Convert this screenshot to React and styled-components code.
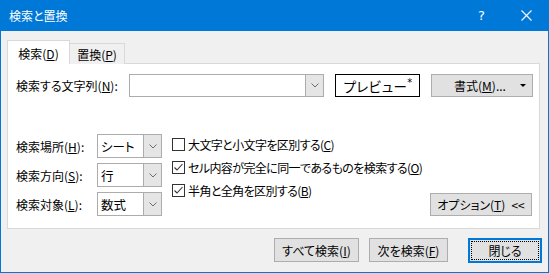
import React from "react";
import styled, { createGlobalStyle } from "styled-components";

const GlobalStyle = createGlobalStyle`
  html, body {
    margin: 0;
    padding: 0;
    background: #ffffff;
  }
  body {
    font-family: "Noto Sans CJK JP", "Noto Sans", sans-serif;
    font-size: 12px;
    color: #000000;
    font-feature-settings: "palt";
  }
  u {
    text-underline-offset: 1px;
  }
`;

const Window = styled.div`
  box-sizing: border-box;
  width: 549px;
  height: 273px;
  display: flex;
  flex-direction: column;
  background: #f0f0f0;
  border: 1px solid #0078d7;
  border-top: none;
`;

const TitleBar = styled.div`
  height: 31px;
  margin: 0 -1px;
  background: #0078d7;
  color: #ffffff;
  display: flex;
  align-items: center;
  padding-left: 9px;
  flex-shrink: 0;
`;

const Title = styled.div`
  flex: 1;
  font-size: 12px;
`;

const TitleButton = styled.div`
  width: 45px;
  height: 31px;
  display: flex;
  align-items: center;
  justify-content: center;
  font-family: "DejaVu Sans", sans-serif;
  font-size: 13px;
`;

const Body = styled.div`
  flex: 1;
  display: flex;
  flex-direction: column;
  padding: 9px 0 0 6px;
`;

const TabStrip = styled.div`
  display: flex;
  align-items: flex-end;
  height: 24px;
  margin-bottom: -1px;
  position: relative;
  z-index: 1;
`;

const Tab = styled.div`
  box-sizing: border-box;
  display: flex;
  align-items: center;
  justify-content: center;
  border: 1px solid #d9d9d9;
  border-bottom: none;
  width: ${p => p.$w}px;
  height: ${p => (p.$active ? 24 : 21)}px;
  background: ${p => (p.$active ? "#ffffff" : "#f0f0f0")};
  ${p => (p.$active ? "" : "border-left: none;")}
  padding-top: 1px;
`;

const Panel = styled.div`
  box-sizing: border-box;
  width: 533px;
  height: 166px;
  background: #ffffff;
  border: 1px solid #d9d9d9;
  padding: 10px 0 0 8px;
  display: flex;
  flex-direction: column;
`;

const Row = styled.div`
  display: flex;
  align-items: center;
  height: 23px;
`;

const Label = styled.div`
  width: ${p => p.$w}px;
  flex-shrink: 0;
  white-space: nowrap;
`;

const Combo = styled.div`
  box-sizing: border-box;
  width: ${p => p.$w}px;
  height: ${p => p.$h}px;
  border: 1px solid #acacac;
  background: #ffffff;
  display: flex;
  flex-shrink: 0;
`;

const ComboText = styled.div`
  flex: 1;
  display: flex;
  align-items: center;
  padding-left: 3px;
  font-size: 12.5px;
`;

const ComboButton = styled.div`
  width: 17px;
  background: #e5e5e5;
  border-left: 1px solid #acacac;
  display: flex;
  align-items: center;
  justify-content: center;
`;

const Preview = styled.div`
  box-sizing: border-box;
  width: 85px;
  height: 23px;
  margin-left: 11px;
  border: 1px solid #000000;
  display: flex;
  align-items: center;
  justify-content: center;
  font-size: 13.5px;
  font-feature-settings: normal;
  letter-spacing: -0.8px;
`;

const Star = styled.span`
  font-family: "DejaVu Sans", sans-serif;
  font-size: 10px;
  align-self: flex-start;
  margin-top: 2px;
  margin-left: 1px;
  letter-spacing: 0;
`;

const Button = styled.div`
  box-sizing: border-box;
  width: ${p => p.$w}px;
  height: ${p => p.$h || 23}px;
  margin-left: ${p => p.$ml || 0}px;
  background: #e1e1e1;
  border: 1px solid #adadad;
  display: flex;
  align-items: center;
  justify-content: center;
  white-space: nowrap;
  flex-shrink: 0;
`;

const DefaultButton = styled(Button)`
  border: 2px solid #0078d7;
  padding: 1px;
`;

const FocusRing = styled.div`
  flex: 1;
  align-self: stretch;
  border: 1px dotted #000000;
  display: flex;
  align-items: center;
  justify-content: center;
`;

const MenuButtonText = styled.div`
  flex: 1;
  text-align: center;
  padding-left: 8px;
`;

const Caret = styled.div`
  width: 0;
  height: 0;
  border-left: 3px solid transparent;
  border-right: 3px solid transparent;
  border-top: 3px solid #000000;
  margin-right: 6px;
`;

const Options = styled.div`
  display: flex;
  align-items: flex-end;
  margin-top: 37px;
`;

const FieldGrid = styled.div`
  display: grid;
  grid-template-columns: 81px 65px;
  grid-auto-rows: 24px;
  row-gap: 5px;
  align-items: center;
`;

const CheckList = styled.div`
  display: flex;
  flex-direction: column;
  gap: 2px;
  margin-left: 10px;
  align-self: flex-start;
`;

const CheckRow = styled.div`
  display: flex;
  align-items: center;
  height: 21px;
  gap: 3px;
  white-space: nowrap;
`;

const CheckText = styled.span`
  letter-spacing: -0.6px;
`;

const Box = styled.div`
  box-sizing: border-box;
  width: 13px;
  height: 13px;
  border: 1px solid #333333;
  background: #ffffff;
  display: flex;
  align-items: center;
  justify-content: center;
  flex-shrink: 0;
`;

const OptionButton = styled(Button)`
  margin-left: auto;
  margin-right: 7px;
  gap: 6px;
`;

const Footer = styled.div`
  display: flex;
  justify-content: flex-end;
  padding: 9px 6px 0 0;
`;

function Chevron() {
  return (
    <svg width="8" height="5" viewBox="0 0 8 5">
      <path d="M0.5 0.5 L4 4 L7.5 0.5" fill="none" stroke="#6d6d6d" strokeWidth="1" />
    </svg>
  );
}

function CloseIcon() {
  return (
    <svg width="11" height="11" viewBox="0 0 11 11">
      <path d="M0.5 0.5 L10.5 10.5 M10.5 0.5 L0.5 10.5" stroke="#ffffff" strokeWidth="1.1" />
    </svg>
  );
}

function Check({ checked }) {
  return (
    <Box>
      {checked && (
        <svg width="11" height="11" viewBox="0 0 11 11">
          <path d="M1.5 5.5 L4 8 L9.5 2" fill="none" stroke="#333333" strokeWidth="1.1" />
        </svg>
      )}
    </Box>
  );
}

function Select({ value, w, h }) {
  return (
    <Combo $w={w} $h={h}>
      <ComboText>{value}</ComboText>
      <ComboButton>
        <Chevron />
      </ComboButton>
    </Combo>
  );
}

const fields = [
  { label: "検索場所", key: "H", value: "シート" },
  { label: "検索方向", key: "S", value: "行" },
  { label: "検索対象", key: "L", value: "数式" }
];

const checks = [
  { text: "大文字と小文字を区別する", key: "C", checked: false },
  { text: "セル内容が完全に同一であるものを検索する", key: "O", checked: true },
  { text: "半角と全角を区別する", key: "B", checked: true }
];

export default function App() {
  return (
    <>
      <GlobalStyle />
      <Window>
        <TitleBar>
          <Title>検索と置換</Title>
          <TitleButton>?</TitleButton>
          <TitleButton>
            <CloseIcon />
          </TitleButton>
        </TitleBar>
        <Body>
          <TabStrip>
            <Tab $active $w={63}>
              検索(<u>D</u>)
            </Tab>
            <Tab $w={55}>
              置換(<u>P</u>)
            </Tab>
          </TabStrip>
          <Panel>
            <Row>
              <Label $w={113}>
                検索する文字列(<u>N</u>):
              </Label>
              <Select value="" w={195} h={23} />
              <Preview>
                プレビュー<Star>*</Star>
              </Preview>
              <Button $w={102} $ml={11}>
                <MenuButtonText>
                  書式(<u>M</u>)...
                </MenuButtonText>
                <Caret />
              </Button>
            </Row>
            <Options>
              <FieldGrid>
                {fields.map(f => (
                  <React.Fragment key={f.key}>
                    <Label $w={81}>
                      {f.label}(<u>{f.key}</u>):
                    </Label>
                    <Select value={f.value} w={65} h={24} />
                  </React.Fragment>
                ))}
              </FieldGrid>
              <CheckList>
                {checks.map(c => (
                  <CheckRow key={c.key}>
                    <Check checked={c.checked} />
                    <CheckText>
                      {c.text}(<u>{c.key}</u>)
                    </CheckText>
                  </CheckRow>
                ))}
              </CheckList>
              <OptionButton $w={102}>
                <span>
                  オプション(<u>T</u>)
                </span>
                <span>&lt;&lt;</span>
              </OptionButton>
            </Options>
          </Panel>
          <Footer>
            <Button $w={85} $h={24}>
              すべて検索(<u>I</u>)
            </Button>
            <Button $w={79} $h={24} $ml={10}>
              次を検索(<u>F</u>)
            </Button>
            <DefaultButton $w={74} $h={25} $ml={20}>
              <FocusRing>閉じる</FocusRing>
            </DefaultButton>
          </Footer>
        </Body>
      </Window>
    </>
  );
}
